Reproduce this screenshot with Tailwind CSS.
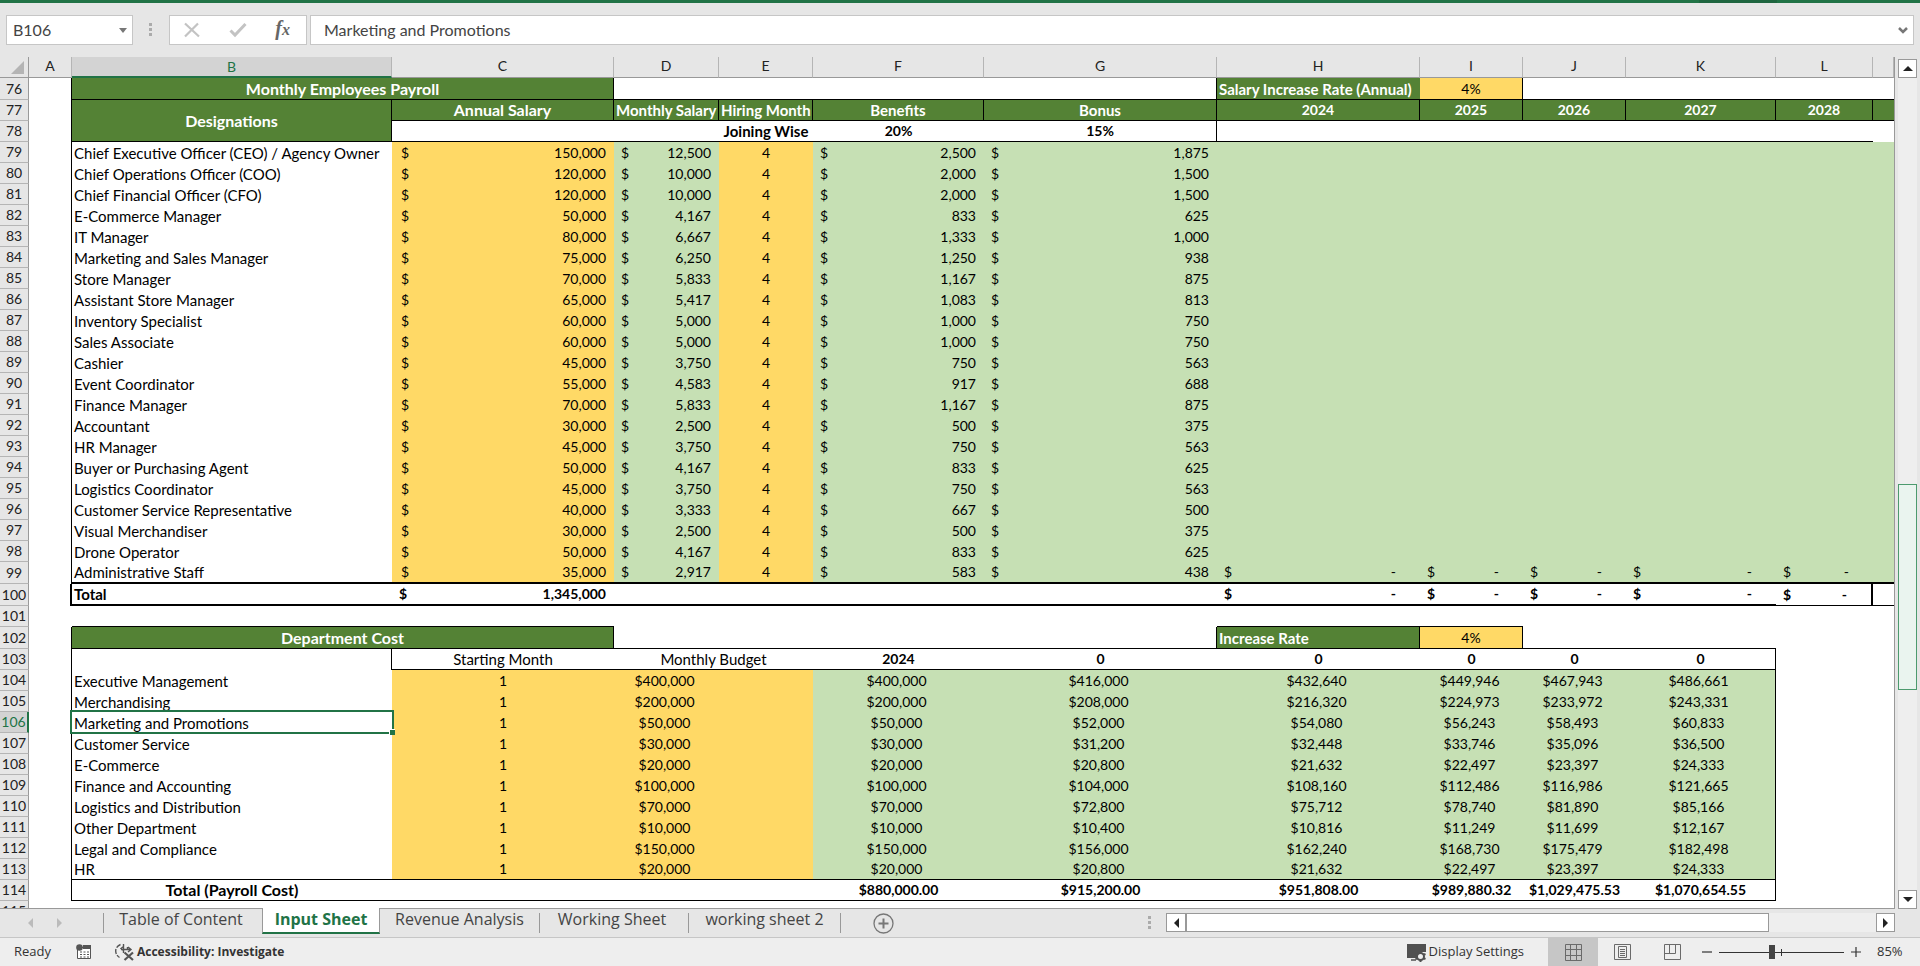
<!DOCTYPE html>
<html lang="en">
<head>
<meta charset="utf-8">
<title>Input Sheet</title>
<script src="https://cdn.jsdelivr.net/npm/@tailwindcss/browser@4"></script>
</head>
<body class="flex h-screen flex-col overflow-hidden bg-[#e6e6e6] font-['Lato',sans-serif] text-black">

<div class="flex h-[3px] shrink-0 justify-end bg-[#217346] pr-[143px]"><div class="w-[78px] bg-[#1f6640]"></div></div>

<header class="flex shrink-0 items-center px-[6px] pt-3 pr-[6px] text-base text-[#444]">
  <div class="flex h-[30px] w-[127px] items-center justify-between border border-[#c6c6c6] bg-white">
    <input aria-label="Name box" value="B106" class="w-20 bg-transparent pl-[6px] outline-none">
    <button aria-label="Name list" class="mr-[5px]"><svg width="8" height="5" viewBox="0 0 8 5"><path d="M0 0h8L4 5z" fill="#777"/></svg></button>
  </div>
  <svg class="mx-4" width="4" height="14" viewBox="0 0 4 14" fill="#ababab"><path d="M0 0h3v3H0zM0 5h3v3H0zM0 10h3v3H0z"/></svg>
  <div class="flex h-[30px] w-[138px] items-center justify-between border border-[#c6c6c6] bg-white pr-4 pl-[13px]">
    <button aria-label="Cancel"><svg width="18" height="16" viewBox="0 0 18 16" fill="none" stroke="#c3c3c3" stroke-width="2.2"><path d="M2 1.500 16 14.500M15 1.500 2 14.500"/></svg></button>
    <button aria-label="Enter"><svg width="18" height="16" viewBox="0 0 18 16" fill="none" stroke="#c3c3c3" stroke-width="3"><path d="M1.500 8.500 6 13 16.500 2"/></svg></button>
    <button aria-label="Insert function" class="font-['Liberation_Serif',serif] text-xl leading-5 font-bold text-[#666] italic">f<span class="text-base">x</span></button>
  </div>
  <div class="ml-[3px] flex h-[30px] flex-1 items-center border border-[#c6c6c6] bg-white">
    <input aria-label="Formula bar" value="Marketing and Promotions" class="min-w-0 flex-1 bg-transparent pl-[13px] outline-none">
    <button aria-label="Expand formula bar" class="mr-[5px]"><svg width="10" height="7" viewBox="0 0 10 7" fill="none" stroke="#777" stroke-width="2.500"><path d="M1 1l4 4 4-4"/></svg></button>
  </div>
</header>

<main class="mt-3 flex min-h-0 flex-1">
  <div class="min-w-0 flex-1 overflow-hidden border-r border-b border-[#999] bg-white">
    <table class="w-full table-fixed border-separate border-spacing-0 text-sm">
      <colgroup>
        <col class="w-[29px]"><col class="w-[43px]"><col class="w-[320px]"><col class="w-[222px]"><col class="w-[105px]"><col class="w-[94px]"><col class="w-[171px]"><col class="w-[233px]"><col class="w-[203px]"><col class="w-[103px]"><col class="w-[103px]"><col class="w-[150px]"><col class="w-[97px]"><col>
      </colgroup>
      <thead><tr id="letters" class="h-[21px]"></tr></thead>
      <tbody id="cells"></tbody>
    </table>
  </div>
  <div class="mt-[2px] mr-[3px] ml-[3px] flex w-[19px] flex-col bg-[#eee]">
    <button aria-label="Scroll up" class="flex h-[19px] items-center justify-center border border-[#999] bg-white"><svg width="10" height="5" viewBox="0 0 10 5"><path d="M0 5h10L5 0z" fill="#222"/></svg></button>
    <div class="flex-[407]"></div>
    <div class="flex-[204] border border-[#4c9a6e] bg-[#eaf4ef]"></div>
    <div class="flex-[201]"></div>
    <button aria-label="Scroll down" class="flex h-[19px] items-center justify-center border border-[#999] bg-white"><svg width="10" height="5" viewBox="0 0 10 5"><path d="M0 0h10L5 5z" fill="#222"/></svg></button>
  </div>
</main>

<nav class="flex h-7 shrink-0 items-start font-['Open_Sans',sans-serif] text-base text-[#444]">
  <div class="flex h-7 w-[103px] items-center gap-6 pl-7">
    <button aria-label="Previous sheets"><svg width="5" height="10" viewBox="0 0 5 10"><path d="M5 0v10L0 5z" fill="#bbb"/></svg></button>
    <button aria-label="Next sheets"><svg width="5" height="10" viewBox="0 0 5 10"><path d="M0 0v10l5-5z" fill="#bbb"/></svg></button>
  </div>
  <a href="#toc" class="mt-1 h-5 w-[159px] border-l border-[#999] pr-1 text-center leading-3">Table of Content</a>
  <a href="#input" class="-mt-px h-[26px] w-[118px] border-x border-b-2 border-x-[#999] border-b-[#217346] bg-white text-center leading-[22px] font-bold text-[#217346]">Input Sheet</a>
  <a href="#revenue" class="mt-1 h-5 w-[160px] border-r border-[#999] text-center leading-3">Revenue Analysis</a>
  <a href="#working" class="mt-1 h-5 w-[149px] border-r border-[#999] pr-1 text-center leading-3">Working Sheet</a>
  <a href="#working2" class="mt-1 h-5 w-[152px] border-r border-[#999] text-center leading-3">working sheet 2</a>
  <button aria-label="New sheet" class="mt-1 ml-8"><svg width="21" height="21" viewBox="0 0 21 21" fill="none" stroke="#777"><circle cx="10.500" cy="10.500" r="9.500" stroke-width="1.300"/><path d="M10.500 5.500v10M5.500 10.500h10" stroke-width="2"/></svg></button>
  <div class="flex-1"></div>
  <svg class="mt-[7px] mr-[15px]" width="3" height="14" viewBox="0 0 3 14" fill="#ababab"><path d="M0 0h3v3H0zM0 5h3v3H0zM0 10h3v3H0z"/></svg>
  <div class="mt-1 mr-[25px] flex h-[19px] w-[729px] bg-[#eee]">
    <button aria-label="Scroll left" class="flex w-5 items-center justify-center border border-[#999] bg-white"><svg width="5" height="10" viewBox="0 0 5 10"><path d="M5 0v10L0 5z" fill="#222"/></svg></button>
    <div class="flex-[583] border border-[#999] bg-white"></div>
    <div class="flex-[107]"></div>
    <button aria-label="Scroll right" class="flex w-[19px] items-center justify-center border border-[#999] bg-white"><svg width="5" height="10" viewBox="0 0 5 10"><path d="M0 0v10l5-5z" fill="#222"/></svg></button>
  </div>
</nav>

<footer class="flex h-[29px] shrink-0 items-center border-t border-[#c6c6c6] bg-[#eee] font-['Open_Sans',sans-serif] text-[13px] text-[#333]">
  <span class="w-[76px] pl-[14px]">Ready</span>
  <button aria-label="Record macro"><svg width="16" height="16" viewBox="0 0 16 16"><path d="M1.500 3.500h13v11h-13z" fill="#fff" stroke="#555"/><path d="M7 1h8v4H7z" fill="#555"/><path d="M4 8h2m1.500 0h2m1.500 0h2M4 10.500h2m1.500 0h2m1.500 0h2M4 13h2m1.500 0h2m1.500 0h2" stroke="#555"/><circle cx="3.500" cy="3.500" r="3.300" fill="#555"/></svg></button>
  <button class="ml-[23px] flex items-center gap-[3px] text-xs font-bold"><svg width="19" height="18" viewBox="0 0 19 18" fill="none" stroke="#555" stroke-width="1.400"><path d="M5.500 1.500C2 3 .7 5.500 .7 8s1.300 5 3.800 6.500" stroke-dasharray="5 1.500"/><path d="M8.500 1v5M6 5.500l2.500-2v4zM6 6.500h10M13 4l3 2.500L13 9M12.500 4v3M8.500 7v3"/><path d="M9.500 9.500 18 17M18 9.500 9.500 17" stroke-width="2.200"/></svg>Accessibility: Investigate</button>
  <div class="flex-1"></div>
  <button class="mr-6 flex items-center gap-[2px]"><svg width="20" height="19" viewBox="0 0 20 19"><path d="M0 1h19v8h-4l-5 3v3H0z" fill="#505050"/><path d="M4 17h5" stroke="#505050" stroke-width="1.500"/><circle cx="13.500" cy="13.500" r="3.500" fill="#eee" stroke="#505050" stroke-width="2"/><path d="M13.500 8v3M13.500 16v3M8.500 11l2.500 1M16 15l2.500 1M8.500 16l2.500-1M16 12l2.500-1" stroke="#505050" stroke-width="2"/></svg>Display Settings</button>
  <button aria-label="Normal view" class="flex h-7 w-[50px] items-center justify-center bg-[#c6c6c6]"><svg width="17" height="17" viewBox="0 0 17 17" fill="none" stroke="#6a6a6a"><path d="M.5.5h16v16H.5zM.5 5.500h16M.5 11.500h16M5.500.5v16M11.500.5v16"/></svg></button>
  <button aria-label="Page layout" class="flex h-7 w-[49px] items-center justify-center"><svg width="17" height="17" viewBox="0 0 17 17" fill="none" stroke="#6a6a6a"><path d="M.5.500h16v15H.5zM4.500 2.500h8v11h-8zM6 5.500h5M6 7.500h5M6 9.500h5M6 11.500h5"/></svg></button>
  <button aria-label="Page break preview" class="flex h-7 w-[51px] items-center justify-center"><svg width="17" height="17" viewBox="0 0 17 17" fill="none" stroke="#6a6a6a"><path d="M.5.500h16v15H.5zM.5 9.500h11M5.500.500v9M11.500.500v9"/></svg></button>
  <button aria-label="Zoom out" class="ml-1"><svg width="10" height="10" viewBox="0 0 10 10"><path d="M0 5h10" stroke="#333" stroke-width="1.200"/></svg></button>
  <svg class="mx-[7px]" width="125" height="14" viewBox="0 0 125 14" role="img" aria-label="Zoom slider"><path d="M0 7.500h125M62.500 4v7" stroke="#333"/><path d="M50 0h6v14h-6z" fill="#444"/></svg>
  <button aria-label="Zoom in"><svg width="10" height="10" viewBox="0 0 10 10"><path d="M0 5h10M5 0v10" stroke="#333" stroke-width="1.200"/></svg></button>
  <span class="w-[59px] pl-4">85%</span>
</footer>

<script>
const GREEN = 'bg-[#548235] text-white font-bold text-center';
const YELLOW = 'bg-[#ffd966]';
const PALE = 'bg-[#c6e0b4]';
const R = 'border-r', B = 'border-b';
const body = document.getElementById('cells');

document.getElementById('letters').innerHTML =
  '<th class="border-r border-b border-[#999] bg-[#e6e6e6]"><svg class="ml-auto mr-1" width="13" height="13" viewBox="0 0 13 13"><path d="M13 0v13H0z" fill="#b4b4b4"/></svg></th>' +
  [...'ABCDEFGHIJKL', ''].map(c => c === 'B'
    ? '<th class="border-r border-b-2 border-r-[#b5b5b5] border-b-[#217346] bg-[#d3d3d3] p-0 leading-[18px] font-normal text-[#217346]">B</th>'
    : `<th class="border-r border-b border-r-[#b5b5b5] border-b-[#999] bg-[#e6e6e6] p-0 align-top leading-[18px] font-normal text-[#222]">${c}</th>`).join('');

// cell: [text, classes, colspan, rowspan]
function row(n, cells, tall) {
  const active = n === 106;
  const head = active
    ? 'border-r-2 border-b border-r-[#217346] border-b-[#b5b5b5] bg-[#d3d3d3] text-[#217346]'
    : 'border-r border-b border-r-[#999] border-b-[#b5b5b5] bg-[#e6e6e6] text-[#222]';
  body.insertAdjacentHTML('beforeend', `<tr class="${tall ? 'h-[22px]' : 'h-[21px]'}"><th class="${head} overflow-hidden p-0 text-center leading-[20px] font-normal">${n}</th>` +
    cells.map(([t = '', cls = '', cs = 1, rs = 1]) =>
      `<td class="border-black p-0 leading-[20px] whitespace-nowrap ${cls}" colspan="${cs}" rowspan="${rs}">${t}</td>`).join('') + '</tr>');
}
const label = t => `<div class="pl-[2px] text-[15px] leading-[20px]">${t}</div>`;
const mid = t => `<div class="text-[15px] leading-[20px]">${t}</div>`;
const title = t => `<div class="text-[16px] leading-[20px]">${t}</div>`;
const clip = t => `<div class="overflow-hidden pl-[2px] text-left text-[15px] leading-[20px]">${t}</div>`;
const money = v => `<div class="flex justify-between pr-2 pl-[7px]"><span>$</span><span>${v}</span></div>`;
const pay$ = v => `<div class="flex justify-between pr-2 pl-[9px]"><span>$</span><span>${v}</span></div>`;
const dash = `<div class="flex justify-between pr-6 pl-[7px]"><span>$</span><span>-</span></div>`;
const num = v => Math.round(v).toLocaleString('en-US');

row(76, [['', R], [title('Monthly Employees Payroll'), `${GREEN} ${R} ${B}`, 2], ['', `${R} ${B}`, 4],
  [clip('Salary Increase Rate (Annual)'), `${GREEN} ${B}`], ['4%', `${YELLOW} text-center ${R} ${B}`], ['', B, 4]], true);
row(77, [['', R], [title('Designations'), `${GREEN} ${R} ${B}`, 1, 2], [title('Annual Salary'), `${GREEN} ${R} ${B}`],
  [clip('Monthly Salary'), `${GREEN} ${R} ${B}`], [clip('Hiring Month'), `${GREEN} ${R} ${B}`],
  [mid('Benefits'), `${GREEN} ${R} ${B}`], [mid('Bonus'), `${GREEN} ${R} ${B}`],
  ...[2024, 2025, 2026, 2027, 2028].map(y => [y, `${GREEN} ${R} ${B}`]), ['', `${GREEN} ${B}`]]);
row(78, [['', R], ['', B, 2], [mid('Joining Wise'), `${B} font-bold text-center`], ['20%', `${B} font-bold text-center`],
  ['15%', `${B} ${R} font-bold text-center`], ['', B, 5], ['']]);

const staff = [
  ['Chief Executive Officer (CEO) / Agency Owner', 150000], ['Chief Operations Officer (COO)', 120000], ['Chief Financial Officer (CFO)', 120000],
  ['E-Commerce Manager', 50000], ['IT Manager', 80000], ['Marketing and Sales Manager', 75000], ['Store Manager', 70000],
  ['Assistant Store Manager', 65000], ['Inventory Specialist', 60000], ['Sales Associate', 60000], ['Cashier', 45000],
  ['Event Coordinator', 55000], ['Finance Manager', 70000], ['Accountant', 30000], ['HR Manager', 45000],
  ['Buyer or Purchasing Agent', 50000], ['Logistics Coordinator', 45000], ['Customer Service Representative', 40000],
  ['Visual Merchandiser', 30000], ['Drone Operator', 50000], ['Administrative Staff', 35000]];
staff.forEach(([name, pay], i) => {
  const last = i === staff.length - 1, b = last ? 'border-b-2' : '';
  row(79 + i, [['', R], [label(name), b], [pay$(num(pay)), `${YELLOW} ${b}`], [money(num(pay / 12)), `${PALE} ${b}`],
    ['4', `${YELLOW} ${b} text-center`], [money(num(pay / 60)), `${PALE} ${b}`], [money(num(pay / 80)), `${PALE} ${b}`],
    ...(last ? [0, 1, 2, 3, 4].map(() => [dash, `${PALE} ${b}`]).concat([['', `${PALE} ${b}`]]) : [['', PALE, 6]])], last);
});
row(100, [['', 'border-r-2'], [label('Total'), 'border-b-2 font-bold'], [money('1,345,000'), 'border-b-2 font-bold'], ['', 'border-b-2', 4],
  ...[0, 1, 2, 3].map(() => [dash, 'border-b-2 font-bold']), [dash, `border-r-2 ${B} font-bold`], ['', B]], true);
row(101, [[''], ['', B, 2], ['', '', 4], ['', B, 2], ['', '', 4]]);
row(102, [['', R], [title('Department Cost'), `${GREEN} ${R} ${B}`, 2], ['', `${R} ${B}`, 4], [clip('Increase Rate'), `${GREEN} ${R} ${B}`],
  ['4%', `${YELLOW} text-center ${R} ${B}`], ['', B, 2], ['', '', 2]], true);
row(103, [['', R], ['', R], [mid('Starting Month'), `${B} text-center`], [mid('Monthly Budget'), `${B} text-center`, 2],
  ['2024', `${B} font-bold text-center`], ...[0, 1, 2, 3].map(() => ['0', `${B} font-bold text-center`]),
  ['0', `${B} ${R} font-bold text-center`], ['', '', 2]]);

const depts = [
  ['Executive Management', '400,000', '416,000', '432,640', '449,946', '467,943', '486,661'],
  ['Merchandising', '200,000', '208,000', '216,320', '224,973', '233,972', '243,331'],
  ['Marketing and Promotions', '50,000', '52,000', '54,080', '56,243', '58,493', '60,833'],
  ['Customer Service', '30,000', '31,200', '32,448', '33,746', '35,096', '36,500'],
  ['E-Commerce', '20,000', '20,800', '21,632', '22,497', '23,397', '24,333'],
  ['Finance and Accounting', '100,000', '104,000', '108,160', '112,486', '116,986', '121,665'],
  ['Logistics and Distribution', '70,000', '72,800', '75,712', '78,740', '81,890', '85,166'],
  ['Other Department', '10,000', '10,400', '10,816', '11,249', '11,699', '12,167'],
  ['Legal and Compliance', '150,000', '156,000', '162,240', '168,730', '175,479', '182,498'],
  ['HR', '20,000', '20,800', '21,632', '22,497', '23,397', '24,333']];
depts.forEach(([name, base, ...years], i) => {
  const b = i === depts.length - 1 ? B : '';
  const sel = i === 2 ? '<div class="pointer-events-none absolute -inset-x-[2px] -top-[2px] -bottom-px border-2 border-[#217346]"><i class="absolute -right-[3px] -bottom-[3px] size-[6px] border-t border-l border-white bg-[#217346]"></i></div>' : '';
  row(104 + i, [['', R], [label(name) + sel, `${b} relative`], ['1', `${YELLOW} ${b} text-center`], ['$' + base, `${YELLOW} ${b} pr-1 text-center`], ['', `${YELLOW} ${b}`],
    ...[base, ...years].map((v, k) => ['$' + v, `${PALE} ${b} pr-1 text-center ${k === 5 ? R : ''}`]), ['', '', 2]]);
});
row(114, [['', R], [title('Total (Payroll Cost)'), `${B} font-bold text-center`], ['', B, 3],
  ...['$880,000.00', '$915,200.00', '$951,808.00', '$989,880.32', '$1,029,475.53'].map(v => [v, `${B} font-bold text-center`]),
  ['$1,070,654.55', `${B} ${R} font-bold text-center`], ['', '', 2]]);
row(115, [['', '', 13]]);
</script>
</body>
</html>
